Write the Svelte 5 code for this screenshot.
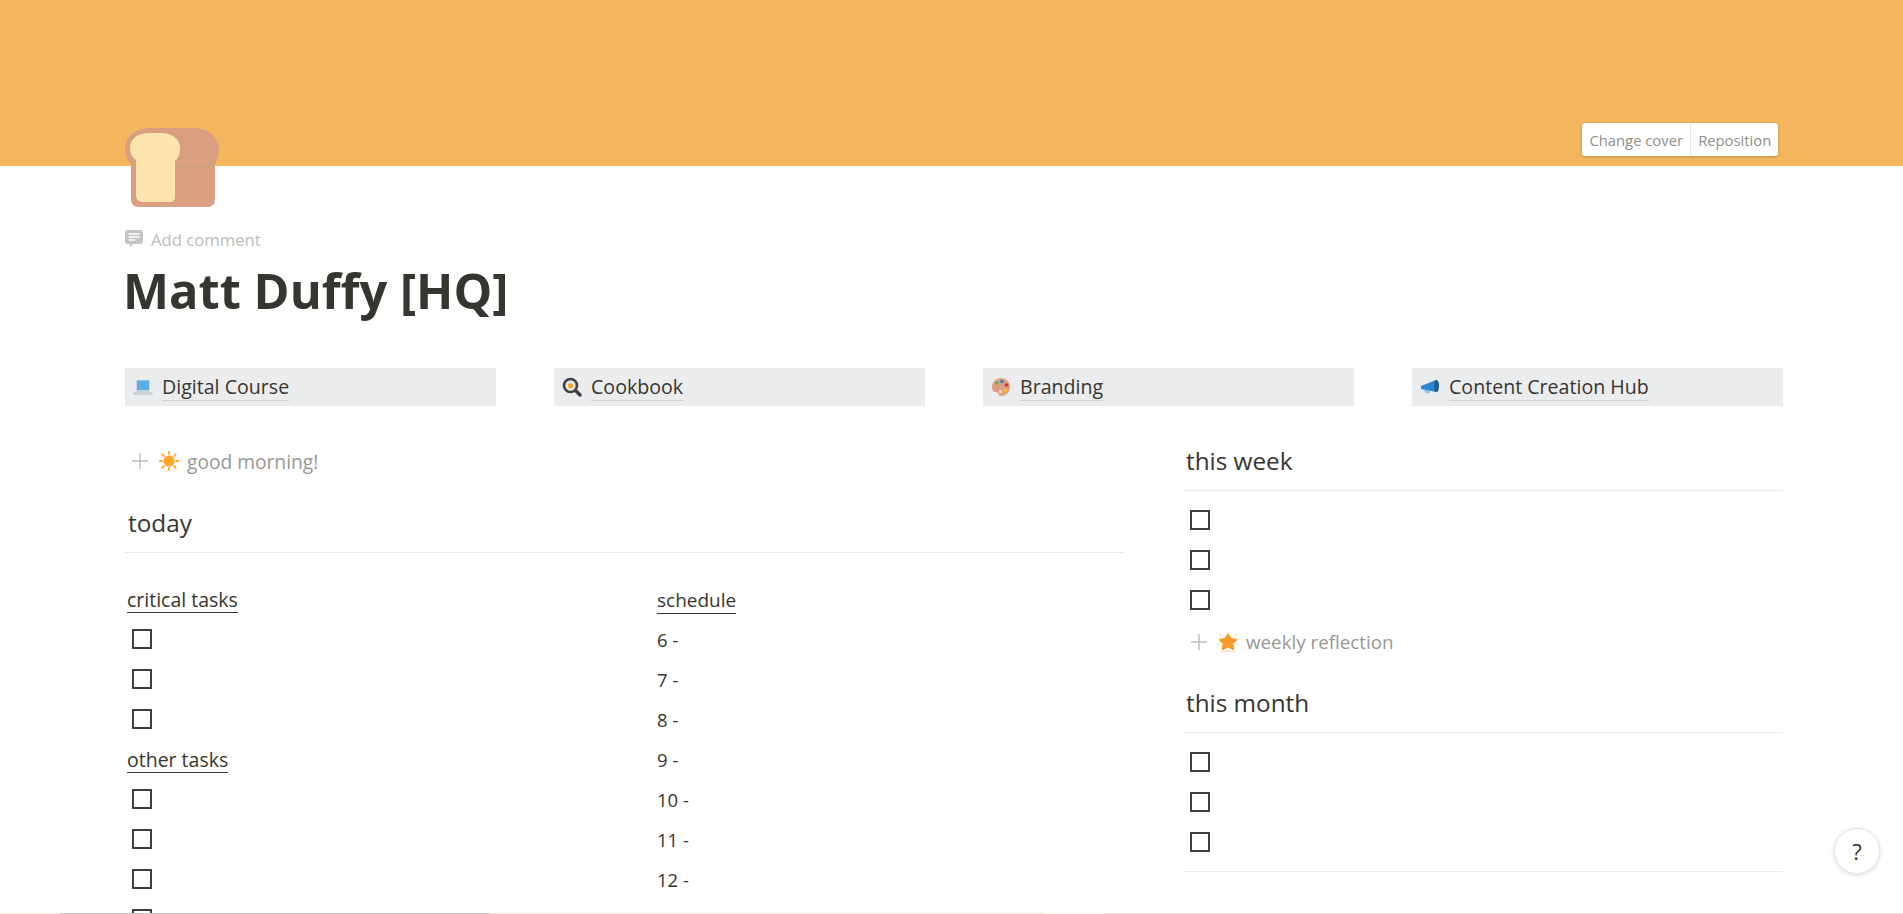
<script>
  const links = [
    { icon: "laptop", label: "Digital Course" },
    { icon: "pan", label: "Cookbook" },
    { icon: "palette", label: "Branding" },
    { icon: "horn", label: "Content Creation Hub" },
  ];
  const hours = ["6 -", "7 -", "8 -", "9 -", "10 -", "11 -", "12 -"];
</script>

{#snippet check(n)}
  {#each Array(n) as _}
    <div class="row"><span class="box"></span></div>
  {/each}
{/snippet}

{#snippet plus()}
  <svg class="plus" viewBox="0 0 16 16" width="16" height="16"><path d="M8 0v16M0 8h16" stroke="#bdbdba" stroke-width="1.4" fill="none" /></svg>
{/snippet}

<div class="page">
  <div class="cover">
    <div class="cover-btns">
      <span>Change cover</span>
      <span class="second">Reposition</span>
    </div>
  </div>

  <div class="main">
    <svg class="bread" viewBox="0 0 94 79" width="94" height="79">
      <path d="M14 79Q6 79 6 71V36Q0 30 0 21C0 8 12 0 26 0H68C84 0 94 10 94 22C94 28 92 33 90 36V71Q90 79 82 79Z" fill="#d99f80" />
      <path d="M50 38.500H90" stroke="#cfa279" stroke-width="2" />
      <path d="M18 74Q11 74 11 67V32Q5 28 5 20C5 10 14 5 24 5H36C47 5 55 11 55 20C55 27 53 30 50 33V69Q50 74 45 74Z" fill="#fde4ae" />
    </svg>

    <div class="comment">
      <svg viewBox="0 0 18 18" width="18" height="18"><path d="M3 0H15Q18 0 18 3V11Q18 14 15 14H8L5 17.500V14H3Q0 14 0 11V3Q0 0 3 0Z" fill="#c4c4c2" /><path d="M3.500 4H14.500M3.500 7H14.500M3.500 10H10" stroke="#fff" stroke-width="1.300" /></svg>
      <span>Add comment</span>
    </div>

    <h1>Matt Duffy [HQ]</h1>

    <div class="links">
      {#each links as l}
        <div class="link">
          <svg viewBox="0 0 20 20" width="20" height="20">
            {#if l.icon === "laptop"}
              <path d="M3 3H17V15H3Z" fill="#c9d3d8" />
              <path d="M4 3.500H16V13H4Z" fill="#5aaee8" />
              <path d="M1 15H19L20 18H0Z" fill="#c8d2d6" />
            {:else if l.icon === "pan"}
              <path d="M13 13L18 18" stroke="#3b3d40" stroke-width="3.400" stroke-linecap="round" />
              <circle cx="8.500" cy="8.500" r="6.500" fill="#e9e7e0" stroke="#3f4245" stroke-width="2.600" />
              <circle cx="8.500" cy="8.800" r="2.500" fill="#f5a623" />
            {:else if l.icon === "palette"}
              <path d="M10 1C15 1 19 5 19 10C19 15 15 19 10 19C7 19 8 15 5 15C2 15 1 13 1 10C1 5 5 1 10 1Z" fill="#dd9d7e" />
              <circle cx="6" cy="6" r="1.800" fill="#6aa84f" />
              <circle cx="11" cy="4.500" r="1.800" fill="#3d78c9" />
              <circle cx="15.500" cy="8" r="1.800" fill="#d9362b" />
              <circle cx="14.500" cy="13.500" r="1.800" fill="#f6c12f" />
              <circle cx="9.500" cy="14.500" r="1.500" fill="#f6e7d8" />
            {:else}
              <path d="M1 9L16 3V15L1 12Z" fill="#2f86cf" />
              <ellipse cx="16.500" cy="9" rx="2.500" ry="6.200" fill="#1d5f9e" />
              <path d="M4 12.500L10 14V15.500Q7 17.500 5 15.500Z" fill="#8cc0e8" />
            {/if}
          </svg>
          <span class="link-text">{l.label}</span>
        </div>
      {/each}
    </div>

    <div class="columns">
      <div class="left">
        <div class="toggle">
          {@render plus()}
          <svg viewBox="0 0 20 20" width="20" height="20">
            <circle cx="10" cy="10" r="5.600" fill="#ffa62b" />
            <path d="M10 0.500V3M10 17V19.500M0.500 10H3M17 10H19.500M3.300 3.300L5 5M15 15L16.700 16.700M3.300 16.700L5 15M15 5L16.700 3.300" stroke="#ffa62b" stroke-width="1.800" stroke-linecap="round" />
          </svg>
          <span>good morning!</span>
        </div>

        <h2>today</h2>

        <div class="today-grid">
          <div>
            <div class="sub"><span>critical tasks</span></div>
            {@render check(3)}
            <div class="sub"><span>other tasks</span></div>
            {@render check(4)}
          </div>
          <div class="schedule">
            <div class="sub"><span>schedule</span></div>
            {#each hours as h}
              <div class="row hour">{h}</div>
            {/each}
          </div>
        </div>
      </div>

      <div class="right">
        <h2 class="flush">this week</h2>
        <div class="list">{@render check(3)}</div>
        <div class="toggle reflect">
          {@render plus()}
          <svg viewBox="0 0 20 20" width="20" height="20">
            <path d="M10 2.500L12.800 7 18 7.800 14.200 11.500 15.300 17 10 14.400 4.700 17 5.800 11.500 2 7.800 7.200 7Z" fill="#fb9a28" stroke="#fb9a28" stroke-width="2" stroke-linejoin="round" />
            <path d="M10 0V1.500M1.500 2L3.500 4M18.500 2L16.500 4M10 18V20M0 12H2M18 12H20M3 19.500H17" stroke="#fdd3a0" stroke-width="1.200" />
          </svg>
          <span>weekly reflection</span>
        </div>
        <h2 class="month">this month</h2>
        <div class="list">{@render check(3)}</div>
        <div class="end-line"></div>
      </div>
    </div>
  </div>

  <button class="help">?</button>

  <div class="strip">
    <i style="width:60px;background:#f3efe6"></i>
    <i style="width:430px;background:#c9c9c7"></i>
    <i style="width:554px;background:#efe9dc"></i>
    <i style="width:60px;background:#f6f3ec"></i>
    <i style="flex:1;background:#e4dcd6"></i>
  </div>
</div>

<style>
  :global(body) {
    margin: 0;
    background: #fff;
  }

  .page {
    position: relative;
    height: 914px;
    overflow: hidden;
    font-family: "Open Sans", "Noto Sans", sans-serif;
    color: #37352f;
  }

  .cover {
    position: relative;
    height: 166px;
    background: #f4b75e;
  }

  .cover-btns {
    position: absolute;
    left: 1582px;
    top: 123px;
    display: flex;
    width: 196px;
    height: 33px;
    box-sizing: border-box;
    background: #fff;
    border-radius: 3px;
    box-shadow: 0 1px 3px rgba(15, 15, 15, 0.25);
    font-size: 14.800px;
    line-height: 34px;
    color: #8f8f8b;
  }

  .cover-btns span {
    width: 109px;
    text-align: center;
    white-space: nowrap;
  }

  .cover-btns .second {
    width: 87px;
    border-left: 1px solid #e8e8e6;
  }

  .main {
    padding-left: 125px;
    width: 1658px;
  }

  .bread {
    display: block;
    margin-top: -38px;
    position: relative;
  }

  .comment {
    display: flex;
    align-items: center;
    height: 24px;
    margin-top: 20px;
    gap: 8px;
    font-size: 16.700px;
    color: #bcbcba;
  }

  h1 {
    margin: 7px 0 0 -2px;
    height: 65px;
    font-size: 48.800px;
    font-weight: 700;
    line-height: 64px;
    color: #37352f;
  }

  .links {
    display: grid;
    grid-template-columns: repeat(4, 371px);
    column-gap: 58px;
    margin-top: 45px;
  }

  .link {
    display: flex;
    align-items: center;
    height: 38px;
    padding-left: 8px;
    gap: 9px;
    background: #ebecee;
    font-size: 19.600px;
    font-weight: 500;
  }

  .link-text {
    line-height: 26px;
    border-bottom: 1px solid #cfcfcd;
    white-space: nowrap;
  }

  .columns {
    display: grid;
    grid-template-columns: 999px 600px;
    column-gap: 59px;
    margin-top: 30px;
  }

  .toggle {
    display: flex;
    align-items: center;
    height: 40px;
    margin-top: 5px;
    padding-left: 7px;
    gap: 11px;
    font-size: 19.200px;
    color: #989894;
  }

  .toggle span {
    margin-left: -3px;
  }

  .toggle.reflect {
    margin-top: 2px;
    padding-left: 8px;
    font-size: 18.800px;
  }

  h2 {
    height: 54px;
    margin: 17px 0 0;
    padding-left: 3px;
    border-bottom: 1px solid #ebebea;
    font-size: 24.300px;
    font-weight: 400;
    line-height: 50px;
  }

  h2.flush {
    margin-top: 0;
  }

  h2.month {
    margin-top: 16px;
  }

  .today-grid {
    display: grid;
    grid-template-columns: 530px 1fr;
    margin-top: 27px;
  }

  .sub {
    height: 40px;
    padding-left: 2px;
    font-size: 19.500px;
    line-height: 40px;
  }

  .sub span {
    display: inline-block;
    line-height: 25px;
    border-bottom: 1px solid #37352f;
  }

  .schedule .sub {
    font-size: 19px;
  }

  .row {
    display: flex;
    align-items: center;
    height: 40px;
  }

  .hour {
    padding: 0 0 2px 2px;
    box-sizing: border-box;
    font-size: 18.500px;
  }

  .box {
    display: block;
    box-sizing: border-box;
    width: 20px;
    height: 20px;
    margin: -2px 0 0 7px;
    border: 2px solid #3f3e38;
  }

  .list {
    margin-top: 9px;
  }

  .list .box {
    margin-top: 0;
  }

  .end-line {
    margin-top: 9px;
    height: 1px;
    background: #ebebea;
  }

  .help {
    position: absolute;
    left: 1834px;
    top: 828px;
    width: 46px;
    height: 46px;
    padding: 0;
    border: 1px solid #e6e6e4;
    border-radius: 50%;
    background: #fff;
    box-shadow: 0 1px 4px rgba(15, 15, 15, 0.15);
    font-family: inherit;
    font-size: 22px;
    color: #37352f;
  }

  .strip {
    position: absolute;
    left: 0;
    right: 0;
    bottom: 0;
    display: flex;
    height: 1px;
  }
</style>
